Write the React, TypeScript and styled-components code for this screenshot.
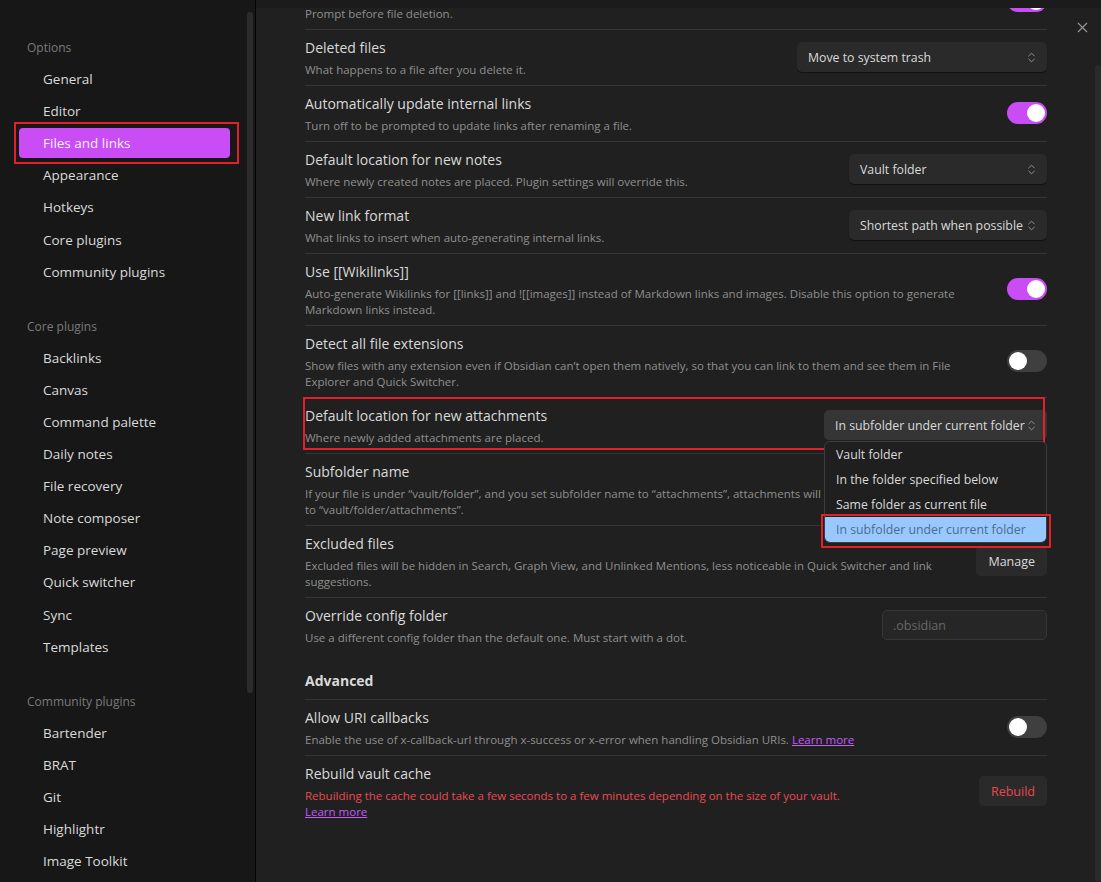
import React, { FC, ReactNode, useLayoutEffect, useRef } from "react";
import styled, { createGlobalStyle } from "styled-components";
import { ChevronsUpDown, X } from "lucide-react";

const GlobalStyle = createGlobalStyle`
  html, body {
    margin: 0;
    padding: 0;
    background: #1b1b1b;
  }
  body {
    font-family: "Open Sans", "Noto Sans", sans-serif;
    -webkit-font-smoothing: antialiased;
  }
`;

const ACCENT = "#c94cf5";

const Window = styled.div`
  display: flex;
  width: 1101px;
  height: 882px;
  overflow: hidden;
`;

const Sidebar = styled.nav`
  position: relative;
  flex: none;
  width: 256px;
  box-sizing: border-box;
  padding: 39px 25px 0 19px;
  background: #171717;
  border-right: 1px solid #050505;
  display: flex;
  flex-direction: column;
  gap: 31px;
`;

const SidebarThumb = styled.div`
  position: absolute;
  left: 247px;
  top: 12px;
  width: 6px;
  height: 681px;
  border-radius: 3px;
  background: #2c2c2c;
`;

const NavGroup = styled.div`
  display: flex;
  flex-direction: column;
  gap: 2.1px;
`;

const NavHeader = styled.div`
  padding-left: 8px;
  margin-bottom: 5px;
  font-size: 12px;
  line-height: 18px;
  color: #7a7a7a;
`;

const NavItem = styled.div<{ $active?: boolean }>`
  position: relative;
  height: 30px;
  padding-left: 24px;
  display: flex;
  align-items: center;
  border-radius: 4px;
  font-size: 13.5px;
  white-space: nowrap;
  color: ${(p) => (p.$active ? "#f4f4f4" : "#dadada")};
  background: ${(p) => (p.$active ? ACCENT : "transparent")};
`;

const Annotation = styled.div<{ $t: number; $r: number; $b: number; $l: number }>`
  position: absolute;
  top: ${(p) => p.$t}px;
  right: ${(p) => p.$r}px;
  bottom: ${(p) => p.$b}px;
  left: ${(p) => p.$l}px;
  border: 2px solid #e3202a;
  pointer-events: none;
`;

const Main = styled.main`
  position: relative;
  flex: 1;
  min-width: 0;
  display: flex;
  flex-direction: column;
  background: #202020;
`;

const TopStrip = styled.div`
  flex: none;
  height: 8px;
  background: #1b1b1b;
`;

const Scroller = styled.div`
  flex: 1;
  min-height: 0;
  overflow: hidden;
  padding: 0 54px 80px 49px;
`;

const CloseButton = styled.div`
  position: absolute;
  top: 19px;
  right: 10px;
  color: #9a9a9a;
  display: flex;
`;

const MainThumb = styled.div`
  position: absolute;
  right: 0;
  top: 65px;
  bottom: 0;
  width: 6px;
  border-radius: 3px;
  background: #2a2a2a;
`;

const Row = styled.div<{ $first?: boolean }>`
  position: relative;
  display: flex;
  align-items: center;
  padding: 6px 0 7px;
  border-top: ${(p) => (p.$first ? "none" : "1px solid #353535")};
`;

const Heading = styled.div`
  padding: 19px 0 9px;
  font-size: 14px;
  line-height: 18px;
  font-weight: 700;
  color: #dadada;
`;

const Info = styled.div`
  flex: 1;
  min-width: 0;
  padding-top: 3px;
`;

const Name = styled.div`
  font-size: 14px;
  line-height: 18px;
  color: #dadada;
`;

const Desc = styled.div<{ $danger?: boolean }>`
  margin-top: 5px;
  font-size: 11.5px;
  line-height: 16px;
  white-space: nowrap;
  color: ${(p) => (p.$danger ? "#ea4b51" : "#8f8f8f")};
`;

const Link = styled.a`
  color: #c35cf6;
  text-decoration: underline;
`;

const Control = styled.div`
  flex: none;
  display: flex;
  justify-content: flex-end;
`;

const SelectWrap = styled.div`
  position: relative;
`;

const SelectBox = styled.div<{ $width: number; $focused?: boolean }>`
  width: ${(p) => p.$width}px;
  height: 30px;
  box-sizing: border-box;
  padding: 0 9px 0 11px;
  display: flex;
  align-items: center;
  justify-content: space-between;
  border-radius: 5px;
  font-size: 12.3px;
  white-space: nowrap;
  color: #dadada;
  background: ${(p) => (p.$focused ? "#353535" : "#2a2a2a")};
  box-shadow: ${(p) => (p.$focused ? "none" : "0 1px 1px rgba(0,0,0,0.45)")};
  svg {
    flex: none;
    color: #9a9a9a;
  }
`;

const Popup = styled.div`
  position: absolute;
  top: calc(100% + 1px);
  left: 0;
  right: 0;
  border: 1px solid #3d3d3d;
  border-radius: 6px;
  background: #1f1f1f;
  z-index: 5;
`;

const Option = styled.div<{ $selected?: boolean }>`
  position: relative;
  height: 25px;
  padding-left: 11px;
  display: flex;
  align-items: center;
  font-size: 12.3px;
  white-space: nowrap;
  color: ${(p) => (p.$selected ? "#4d6b8d" : "#dadada")};
  background: ${(p) => (p.$selected ? "#99c8ff" : "transparent")};
  border-radius: ${(p) => (p.$selected ? "0 0 5px 5px" : "0")};
`;

const Toggle = styled.div<{ $on?: boolean }>`
  width: 40px;
  height: 22px;
  box-sizing: border-box;
  padding: 2px;
  border-radius: 11px;
  display: flex;
  justify-content: ${(p) => (p.$on ? "flex-end" : "flex-start")};
  background: ${(p) => (p.$on ? ACCENT : "#3f3f3f")};
  &::after {
    content: "";
    width: 18px;
    height: 18px;
    border-radius: 50%;
    background: #ffffff;
  }
`;

const Button = styled.div<{ $danger?: boolean }>`
  height: 30px;
  padding: 0 12px;
  display: flex;
  align-items: center;
  border-radius: 5px;
  font-size: 12.5px;
  background: #2a2a2a;
  color: ${(p) => (p.$danger ? "#e9474d" : "#dadada")};
`;

const TextInput = styled.div<{ $muted?: boolean }>`
  width: 165px;
  height: 30px;
  box-sizing: border-box;
  padding: 0 10px;
  display: flex;
  align-items: center;
  border: 1px solid #363636;
  border-radius: 5px;
  background: #262626;
  font-size: 12.5px;
  color: ${(p) => (p.$muted ? "#666" : "#dadada")};
`;

const Select: FC<{ value: string; width: number; focused?: boolean; children?: ReactNode }> = ({
  value,
  width,
  focused,
  children,
}) => (
  <SelectWrap>
    <SelectBox $width={width} $focused={focused}>
      <span>{value}</span>
      <ChevronsUpDown size={13} strokeWidth={1.7} />
    </SelectBox>
    {children}
  </SelectWrap>
);

interface SettingProps {
  name: string;
  desc: ReactNode[];
  control?: ReactNode;
  first?: boolean;
  danger?: boolean;
  overlay?: ReactNode;
}

const Setting: FC<SettingProps> = ({ name, desc, control, first, danger, overlay }) => (
  <Row $first={first}>
    <Info>
      <Name>{name}</Name>
      <Desc $danger={danger}>
        {desc.map((line, i) => (
          <div key={i}>{line}</div>
        ))}
      </Desc>
    </Info>
    <Control>{control}</Control>
    {overlay}
  </Row>
);

const NAV = [
  {
    title: "Options",
    items: ["General", "Editor", "Files and links", "Appearance", "Hotkeys", "Core plugins", "Community plugins"],
  },
  {
    title: "Core plugins",
    items: [
      "Backlinks",
      "Canvas",
      "Command palette",
      "Daily notes",
      "File recovery",
      "Note composer",
      "Page preview",
      "Quick switcher",
      "Sync",
      "Templates",
    ],
  },
  {
    title: "Community plugins",
    items: ["Bartender", "BRAT", "Git", "Highlightr", "Image Toolkit"],
  },
];

const ATTACHMENT_OPTIONS = [
  "Vault folder",
  "In the folder specified below",
  "Same folder as current file",
  "In subfolder under current folder",
];

export default function App() {
  const scrollRef = useRef<HTMLDivElement>(null);

  useLayoutEffect(() => {
    if (scrollRef.current) scrollRef.current.scrollTop = 34;
  }, []);

  return (
    <>
      <GlobalStyle />
      <Window>
        <Sidebar>
          {NAV.map((group) => (
            <NavGroup key={group.title}>
              <NavHeader>{group.title}</NavHeader>
              {group.items.map((item) => {
                const active = item === "Files and links" && group.title === "Options";
                return (
                  <NavItem key={item} $active={active}>
                    {item}
                    {active && <Annotation $t={-6} $r={-9} $b={-6} $l={-5} />}
                  </NavItem>
                );
              })}
            </NavGroup>
          ))}
          <SidebarThumb />
        </Sidebar>

        <Main>
          <TopStrip />
          <Scroller ref={scrollRef}>
            <Setting first name="Confirm file deletion" desc={["Prompt before file deletion."]} control={<Toggle $on />} />
            <Setting
              name="Deleted files"
              desc={["What happens to a file after you delete it."]}
              control={<Select value="Move to system trash" width={250} />}
            />
            <Setting
              name="Automatically update internal links"
              desc={["Turn off to be prompted to update links after renaming a file."]}
              control={<Toggle $on />}
            />
            <Setting
              name="Default location for new notes"
              desc={["Where newly created notes are placed. Plugin settings will override this."]}
              control={<Select value="Vault folder" width={198} />}
            />
            <Setting
              name="New link format"
              desc={["What links to insert when auto-generating internal links."]}
              control={<Select value="Shortest path when possible" width={198} />}
            />
            <Setting
              name="Use [[Wikilinks]]"
              desc={[
                "Auto-generate Wikilinks for [[links]] and ![[images]] instead of Markdown links and images. Disable this option to generate",
                "Markdown links instead.",
              ]}
              control={<Toggle $on />}
            />
            <Setting
              name="Detect all file extensions"
              desc={[
                "Show files with any extension even if Obsidian can’t open them natively, so that you can link to them and see them in File",
                "Explorer and Quick Switcher.",
              ]}
              control={<Toggle />}
            />
            <Setting
              name="Default location for new attachments"
              desc={["Where newly added attachments are placed."]}
              overlay={<Annotation $t={-1} $r={2} $b={3} $l={-2} />}
              control={
                <Select value="In subfolder under current folder" width={223} focused>
                  <Popup>
                    {ATTACHMENT_OPTIONS.map((opt, i) => {
                      const selected = i === ATTACHMENT_OPTIONS.length - 1;
                      return (
                        <Option key={opt} $selected={selected}>
                          {opt}
                          {selected && <Annotation $t={-3} $r={-5} $b={-6} $l={-4} />}
                        </Option>
                      );
                    })}
                  </Popup>
                </Select>
              }
            />
            <Setting
              name="Subfolder name"
              desc={[
                "If your file is under “vault/folder”, and you set subfolder name to “attachments”, attachments will be saved",
                "to “vault/folder/attachments”.",
              ]}
              control={<TextInput>attachments</TextInput>}
            />
            <Setting
              name="Excluded files"
              desc={[
                "Excluded files will be hidden in Search, Graph View, and Unlinked Mentions, less noticeable in Quick Switcher and link",
                "suggestions.",
              ]}
              control={<Button>Manage</Button>}
            />
            <Setting
              name="Override config folder"
              desc={["Use a different config folder than the default one. Must start with a dot."]}
              control={<TextInput $muted>.obsidian</TextInput>}
            />
            <Heading>Advanced</Heading>
            <Setting
              name="Allow URI callbacks"
              desc={[
                <>
                  Enable the use of x-callback-url through x-success or x-error when handling Obsidian URIs.{" "}
                  <Link>Learn more</Link>
                </>,
              ]}
              control={<Toggle />}
            />
            <Setting
              danger
              name="Rebuild vault cache"
              desc={[
                "Rebuilding the cache could take a few seconds to a few minutes depending on the size of your vault.",
                <Link>Learn more</Link>,
              ]}
              control={<Button $danger>Rebuild</Button>}
            />
          </Scroller>
          <CloseButton>
            <X size={17} strokeWidth={1.5} />
          </CloseButton>
          <MainThumb />
        </Main>
      </Window>
    </>
  );
}
